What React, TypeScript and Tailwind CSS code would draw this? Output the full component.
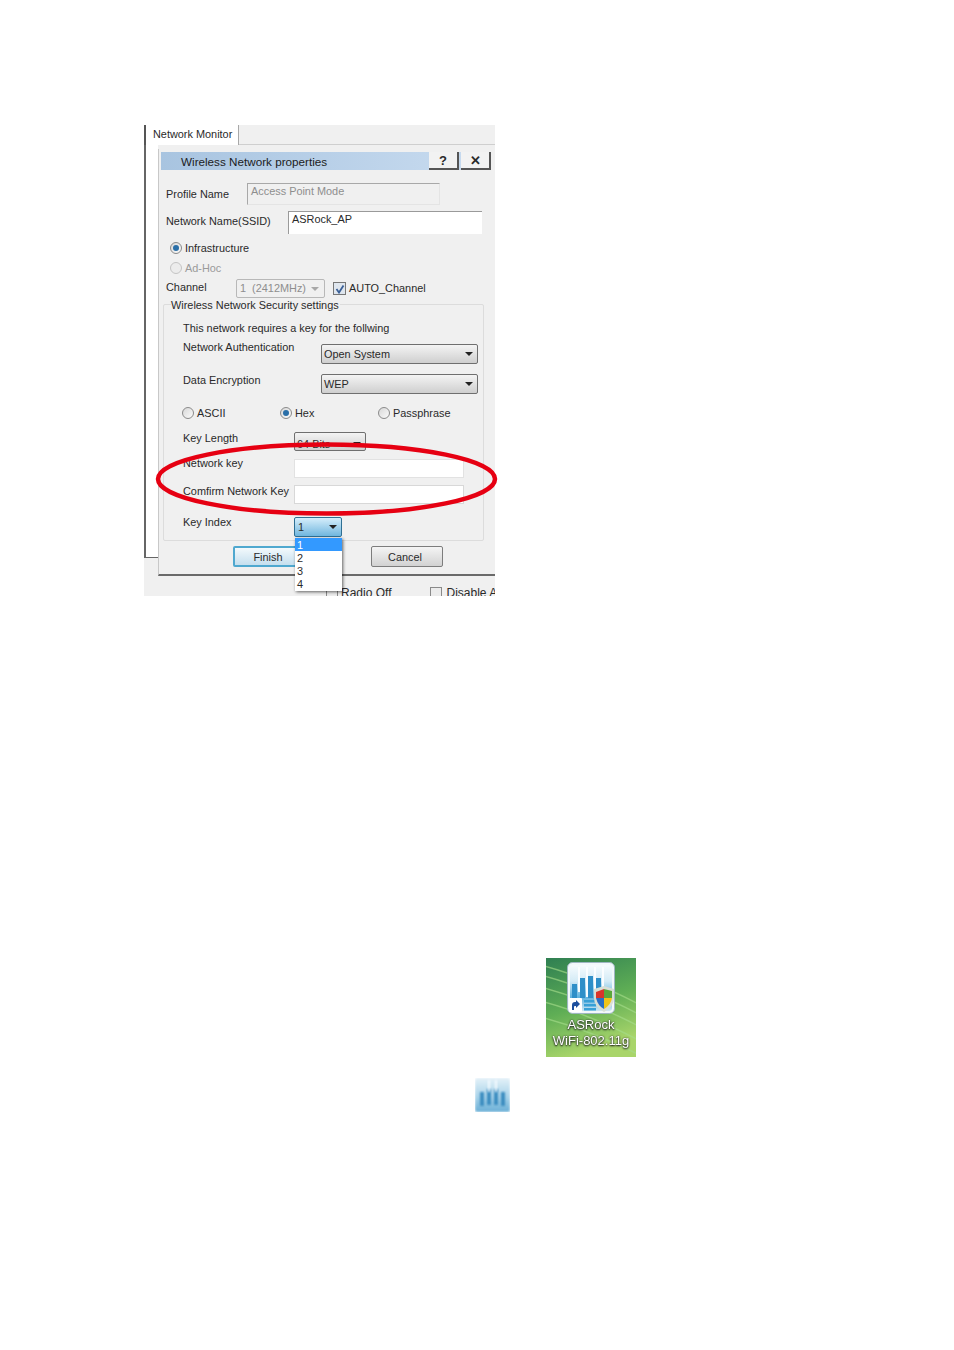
const font = "font-['Liberation_Sans','Arial',sans-serif]";

function Arrow({ color = "#222" }: { color?: string }) {
  return (
    <svg width="8" height="4" viewBox="0 0 8 4" className="shrink-0">
      <path d="M0 0h8L4 4z" fill={color} />
    </svg>
  );
}

function Radio({ checked = false, disabled = false }: { checked?: boolean; disabled?: boolean }) {
  return (
    <span
      className={`flex h-[12px] w-[12px] shrink-0 items-center justify-center rounded-full border ${
        disabled ? "border-[#c4c4c4] bg-[#ececec]" : "border-[#8a8a8a] bg-gradient-to-br from-[#d8d8d8] to-[#fbfbfb]"
      }`}
    >
      {checked && <span className="h-[6px] w-[6px] rounded-full bg-[#2a6fa8]" />}
    </span>
  );
}

function Select({ label, className }: { label: string; className: string }) {
  return (
    <div
      className={`flex items-center justify-between rounded-[2px] border border-[#6f6f6f] bg-gradient-to-b from-[#f4f4f4] to-[#cfcfcf] pl-[2px] pr-[4px] ${className}`}
    >
      <span>{label}</span>
      <Arrow />
    </div>
  );
}

function RadioOption({ label, checked, className }: { label: string; checked?: boolean; className: string }) {
  return (
    <div className={`flex items-center gap-[3px] ${className}`}>
      <Radio checked={checked} />
      <span>{label}</span>
    </div>
  );
}

function SecurityGroup() {
  return (
    <div className="relative ml-[2px] mt-[6px] h-[237px] w-[321px] rounded-[2px] border border-[#dcdcdc] pl-[19px]">
      <span className="absolute left-[7px] top-[-7px] whitespace-nowrap bg-[#f0f0f0] pr-[1px] leading-[14px]">Wireless Network Security settings</span>
      <div className="mt-[16px] h-[14px] leading-[14px]">This network requires a key for the follwing</div>

      <div className="mt-[5px] flex h-[24px] items-start leading-[14px]">
        <span className="w-[138px]">Network Authentication</span>
        <Select label="Open System" className="mt-[4px] h-[20px] w-[157px]" />
      </div>

      <div className="mt-[9px] flex h-[21px] items-start leading-[14px]">
        <span className="w-[138px]">Data Encryption</span>
        <Select label="WEP" className="mt-[1px] h-[20px] w-[157px]" />
      </div>

      <div className="ml-[-1px] mt-[12px] flex h-[14px] leading-[14px]">
        <RadioOption label="ASCII" className="w-[98px]" />
        <RadioOption label="Hex" checked className="w-[98px]" />
        <RadioOption label="Passphrase" className="w-[98px]" />
      </div>

      <div className="mt-[11px] flex h-[20px] items-start leading-[14px]">
        <span className="w-[111px]">Key Length</span>
        <Select label="64 Bits" className="mt-[1px] h-[19px] w-[72px] pt-[4px]" />
      </div>

      <div className="mt-[5px] flex h-[23px] items-start leading-[14px]">
        <span className="w-[111px]">Network key</span>
        <div className="mt-[3px] h-[19px] w-[170px] border border-[#e2e2e2] bg-white" />
      </div>

      <div className="mt-[5px] flex h-[20px] items-start leading-[14px]">
        <span className="w-[111px] whitespace-nowrap">Comfirm Network Key</span>
        <div className="mt-[1px] h-[19px] w-[170px] border border-[#d8d8d8] bg-white" />
      </div>

      <div className="mt-[11px] flex h-[22px] items-start leading-[14px]">
        <span className="w-[111px]">Key Index</span>
        <div className="mt-[2px] flex h-[20px] w-[48px] items-center justify-between rounded-[2px] border border-[#2f6f93] bg-gradient-to-b from-[#d5eefb] to-[#6fb6de] pl-[3px] pr-[4px]">
          <span>1</span>
          <Arrow />
        </div>
      </div>
    </div>
  );
}

function PropertiesDialog() {
  return (
    <div className="mt-[4px] h-[427px] w-[337px] border-b-2 border-l border-[#6a6a6a] border-l-[#c8c8c8] bg-[#f0f0f0] pl-[2px] pt-[3px]">
      <div className="flex h-[18px] w-[330px] items-center justify-between bg-gradient-to-r from-[#a8c4e0] to-[#c9dcf0] pl-[20px]">
        <span className="translate-y-[1px] text-[11.7px] text-[#1c1c1c]">Wireless Network properties</span>
        <div className="flex h-full gap-[2px]">
          <div className="flex w-[30px] items-center justify-center border-b-2 border-r-2 border-[#555] bg-[#f2f2f2] text-[13px] font-bold leading-none">?</div>
          <div className="flex w-[30px] items-center justify-center border-b-2 border-r-2 border-[#555] bg-[#f2f2f2] text-[13px] font-bold leading-none">✕</div>
        </div>
      </div>

      <div className="mt-[13px] flex h-[22px] items-center">
        <span className="ml-[5px] w-[81px]">Profile Name</span>
        <div className="h-full w-[193px] border-b border-l border-r border-t border-[#a8a8a8] border-b-[#e4e4e4] border-r-[#e4e4e4] pl-[3px] leading-[14px] text-[#8e8e8e]">Access Point Mode</div>
      </div>

      <div className="mt-[6px] flex h-[23px] items-center">
        <span className="ml-[5px] w-[122px] -translate-y-[1px]">Network Name(SSID)</span>
        <div className="h-full w-[194px] border-l border-t border-[#9a9a9a] bg-white pl-[3px] leading-[14px]">ASRock_AP</div>
      </div>

      <div className="ml-[9px] mt-[8px] flex h-[12px] items-center gap-[3px]">
        <Radio checked />
        <span>Infrastructure</span>
      </div>

      <div className="ml-[9px] mt-[8px] flex h-[12px] items-center gap-[3px] text-[#9a9a9a]">
        <Radio disabled />
        <span>Ad-Hoc</span>
      </div>

      <div className="mt-[5px] flex h-[19px] items-center">
        <span className="ml-[5px] w-[70px] -translate-y-[1px]">Channel</span>
        <div className="flex h-full w-[89px] items-center justify-between rounded-[2px] border border-[#b8b8b8] pl-[3px] pr-[5px] text-[#8e8e8e]">
          <span className="whitespace-nowrap">1 &nbsp;(2412MHz)</span>
          <Arrow color="#a8a8a8" />
        </div>
        <div className="ml-[8px] flex h-[13px] w-[13px] items-center justify-center border border-[#777] bg-[#dfe6ee]">
          <svg width="10" height="10" viewBox="0 0 10 10">
            <path d="M1.5 5l2.5 3.5L8.5 1.5" fill="none" stroke="#3a5f96" strokeWidth="1.8" />
          </svg>
        </div>
        <span className="ml-[3px]">AUTO_Channel</span>
      </div>

      <SecurityGroup />

      <div className="mt-[5px] flex h-[21px] leading-none">
        <div className="ml-[72px] flex w-[70px] items-center justify-center rounded-[2px] border-2 border-[#4fa8cf] bg-gradient-to-b from-[#f3f9fc] to-[#c5dfee] pt-[1px]">Finish</div>
        <div className="ml-[68px] flex w-[72px] items-center justify-center rounded-[2px] border border-[#7d7d7d] bg-gradient-to-b from-[#f5f5f5] to-[#d2d2d2] pr-[4px] pt-[1px]">Cancel</div>
      </div>
    </div>
  );
}

function DesktopIcon() {
  return (
    <div className="relative ml-[546px] mt-[362px] flex h-[99px] w-[90px] flex-col items-center overflow-hidden bg-[#5aa35a]">
      <svg className="absolute inset-0" width="90" height="99" viewBox="0 0 90 99">
        <defs>
          <linearGradient id="wall" x1="0" y1="0" x2="0.3" y2="1">
            <stop offset="0" stopColor="#2f7f52" />
            <stop offset="0.55" stopColor="#5fae55" />
            <stop offset="1" stopColor="#a9d56a" />
          </linearGradient>
        </defs>
        <rect width="90" height="99" fill="url(#wall)" />
        <g stroke="#a5dc8a" strokeWidth="1.5" opacity="0.65" fill="none">
          <path d="M-10 6 Q40 18 100 50" />
          <path d="M-10 16 Q40 28 100 60" />
          <path d="M-10 28 Q40 40 100 72" />
          <path d="M-10 42 Q40 54 100 86" />
          <path d="M-10 58 Q40 70 100 100" />
        </g>
      </svg>
      <svg className="relative mt-[4px] blur-[0.5px]" width="48" height="52" viewBox="0 0 48 52">
        <defs>
          <linearGradient id="tile" x1="0" y1="0" x2="0" y2="1">
            <stop offset="0" stopColor="#f6fbfd" />
            <stop offset="0.35" stopColor="#d4ebf6" />
            <stop offset="0.7" stopColor="#5fb2de" />
            <stop offset="1" stopColor="#cfe8f4" />
          </linearGradient>
        </defs>
        <rect x="0.5" y="0.5" width="47" height="51" rx="5" fill="#f2f8fb" stroke="#9fb6c2" />
        <rect x="3" y="3" width="42" height="46" rx="3" fill="url(#tile)" />
        <g fill="#2f8fc8">
          <rect x="5" y="22" width="5" height="14" />
          <rect x="13" y="16" width="5" height="20" />
          <rect x="21" y="14" width="5" height="22" />
          <rect x="29" y="16" width="5" height="14" />
        </g>
        <g fill="#fafdff">
          <rect x="11" y="5" width="2" height="25" />
          <rect x="19" y="5" width="2" height="30" />
          <rect x="27" y="5" width="2" height="28" />
          <rect x="35" y="5" width="2" height="20" />
        </g>
        <g fill="#38a0d6">
          <rect x="17" y="38" width="12" height="2.5" />
          <rect x="17" y="42" width="12" height="2.5" />
          <rect x="17" y="46" width="12" height="2.5" />
        </g>
        <rect x="2" y="36" width="13" height="14" rx="1" fill="#fff" />
        <path d="M5 48v-5q0-3 3-3h1v-2l4 4-4 4v-2H8q-1 0-1 1v3z" fill="#1d4f9e" />
        <path d="M37 24l10 3v9q0 9-10 14-10-5-10-14v-9z" fill="#d8dfd6" />
        <path d="M37 27v9h-8v-6z" fill="#d9352b" />
        <path d="M37 27l8 2v7h-8z" fill="#5aa83c" />
        <path d="M29 36h8v11q-6-3-8-11z" fill="#2a6fc4" />
        <path d="M37 36h8q-1 7-8 11z" fill="#f0c419" />
      </svg>
      <div className="relative mt-[3px] text-center text-[13px] leading-[16px] text-white blur-[0.3px] [text-shadow:0_1px_2px_#111,0_0_2px_#333]">
        <div>ASRock</div>
        <div className="whitespace-nowrap">WiFi-802.11g</div>
      </div>
    </div>
  );
}

function TrayIcon() {
  return (
    <svg className="ml-[475px] mt-[21px] block" width="35" height="34" viewBox="0 0 35 34">
      <defs>
        <filter id="soft">
          <feGaussianBlur stdDeviation="1.2" />
        </filter>
        <linearGradient id="tray" x1="0" y1="0" x2="0" y2="1">
          <stop offset="0" stopColor="#e4f1f8" />
          <stop offset="0.55" stopColor="#a8d3ea" />
          <stop offset="1" stopColor="#6aafd6" />
        </linearGradient>
      </defs>
      <rect width="35" height="34" fill="url(#tray)" rx="2" filter="url(#soft)" />
      <g fill="#3a8cbf" filter="url(#soft)">
        <rect x="5" y="14" width="4" height="14" />
        <rect x="12" y="11" width="4" height="16" />
        <rect x="19" y="11" width="4" height="16" />
        <rect x="26" y="14" width="4" height="14" />
      </g>
      <g fill="#f4fbff" filter="url(#soft)">
        <rect x="13" y="2" width="2" height="12" />
        <rect x="20" y="2" width="2" height="12" />
      </g>
    </svg>
  );
}

export default function App() {
  return (
    <div className={`h-[1350px] w-[954px] overflow-hidden bg-white pt-[125px] text-[10.9px] text-[#2a2a2a] ${font}`}>
      <div className="relative ml-[144px] w-[351px]">
        <div className="h-[471px] overflow-hidden bg-[#f0f0f0]">
          <div className="flex h-[20px] border-b border-[#cfcfcf]">
            <div className="flex h-[20px] w-[95px] items-center whitespace-nowrap border-l-2 border-r border-[#555] border-r-[#a8a8a8] bg-white pb-[2px] pl-[7px]">Network Monitor</div>
          </div>

          <div className="flex">
            <div className="h-[413px] w-[14px] border-b border-l-2 border-[#666] bg-white" />
            <PropertiesDialog />
          </div>

          <div className="ml-[182px] mt-[10px] flex h-[14px] items-center text-[12px] leading-none">
            <span className="h-[12px] w-[12px] shrink-0 border border-[#8a8a8a] bg-[#ececec]" />
            <span className="ml-[3px] whitespace-nowrap">Radio Off</span>
            <span className="ml-[39px] h-[12px] w-[12px] shrink-0 border border-[#8a8a8a] bg-[#ececec]" />
            <span className="ml-[4px] whitespace-nowrap">Disable A</span>
          </div>
        </div>

        {/* open Key Index list */}
        <div className="absolute left-[151px] top-[413px] h-[53px] w-[47px] bg-white leading-[13px] shadow-[1px_1px_3px_rgba(0,0,0,0.6)]">
          <div className="h-[13px] bg-[#3399ff] pl-[2px] pt-[1px] text-white">1</div>
          <div className="h-[13px] pl-[2px] pt-[1px]">2</div>
          <div className="h-[13px] pl-[2px] pt-[1px]">3</div>
          <div className="h-[13px] pl-[2px] pt-[1px]">4</div>
        </div>

        {/* red annotation ring */}
        <svg className="absolute left-[11px] top-[316px]" width="344" height="76" viewBox="0 0 344 76">
          <ellipse cx="171.5" cy="38" rx="168.5" ry="34.5" fill="none" stroke="#e60012" strokeWidth="4.5" />
        </svg>
      </div>

      <DesktopIcon />
      <TrayIcon />
    </div>
  );
}
